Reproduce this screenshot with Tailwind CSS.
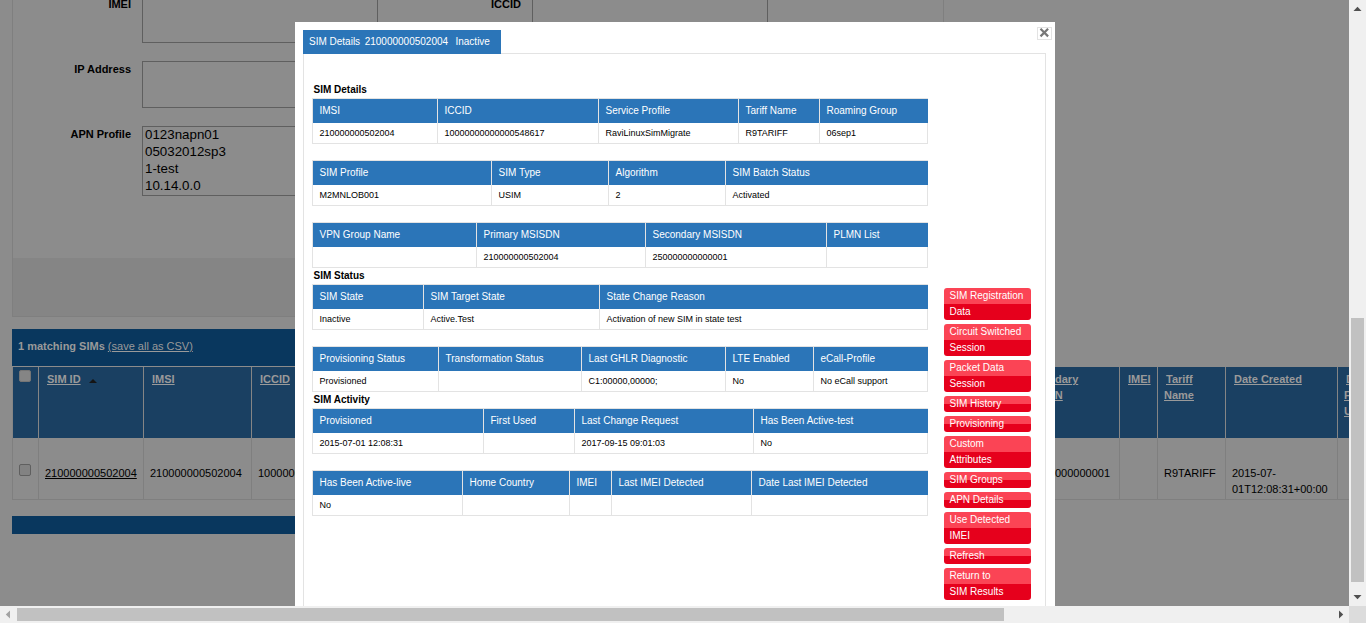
<!DOCTYPE html>
<html lang="en">
<head>
<meta charset="utf-8">
<title>SIM Details</title>
<script src="https://cdn.jsdelivr.net/npm/@tailwindcss/browser@4"></script>
</head>
<body class="overflow-hidden">
<div class="grid h-[623px] w-[1366px] grid-cols-[1349px_17px] grid-rows-[606px_17px] overflow-hidden font-['Liberation_Sans',Arial,sans-serif] text-black">

  <main class="relative h-[606px] overflow-hidden bg-[#8c8c8c] pl-3 text-[11px] leading-4">
    <!-- search form -->
    <section class="flex h-[317px] w-[932px] flex-col border-x border-b border-[#7f7f7f]">
      <div class="flex h-[43px]">
        <div class="-mt-1 w-[118px] text-right font-bold">IMEI</div>
        <div class="ml-[11px] w-[236px] border-x border-b border-[#5f5f5f]"></div>
        <div class="-mt-1 w-[143px] text-right font-bold">ICCID</div>
        <div class="ml-[11px] w-[236px] border-x border-b border-[#5f5f5f]"></div>
      </div>
      <div class="mt-[18px] flex h-[47px]">
        <div class="w-[118px] text-right font-bold">IP Address</div>
        <div class="ml-[11px] w-[236px] border border-[#5f5f5f]"></div>
      </div>
      <div class="mt-[18px] flex h-[70px]">
        <div class="w-[118px] text-right font-bold">APN Profile</div>
        <div class="ml-[11px] w-[236px] border border-[#5f5f5f] pl-0.5 text-[13.33px] leading-[17px]">
          <div class="-mt-px">0123napn01</div><div>05032012sp3</div><div>1-test</div><div>10.14.0.0</div>
        </div>
      </div>
      <div class="mt-auto h-[58px] bg-[#858585]"></div>
    </section>

    <!-- result list -->
    <div class="mt-3 h-[37px] w-[932px] bg-[#09375e] pt-[9px] pl-1.5 text-[#9a9a9a]"><b>1 matching SIMs</b> <span class="underline">(save all as CSV)</span></div>
    <div class="grid h-[72px] w-[1400px] grid-cols-[26px_105px_108px_868px_38px_68px_112px_75px] border-t border-[#8c8c8c] font-bold text-[#9a9a9a] *:border-l *:border-[#858585] *:bg-[#1a4062] *:pt-1">
      <div class="pl-1.5"><div class="mt-[-1px] h-3 w-3 rounded-xs border border-[#757575] bg-[#858585]"></div></div>
      <div class="flex items-start pl-2"><span class="underline">SIM ID</span><span class="mt-2 ml-2 border-x-[4px] border-b-[4px] border-x-transparent border-b-[#151515]"></span></div>
      <div class="pl-2 underline">IMSI</div>
      <div class="flex justify-between pr-[36px] pl-2"><span class="underline">ICCID</span><span class="w-[63px] underline"><span class="pl-0.5">Secondary</span> MSISDN</span></div>
      <div class="pl-2 underline">IMEI</div>
      <div class="pl-1.5 underline indent-0.5">Tariff<br>Name</div>
      <div class="pl-2 underline">Date Created</div>
      <div class="pl-1.5 underline indent-0.5">Date<br>First<br>Used</div>
    </div>
    <div class="grid h-[62px] w-[1400px] grid-cols-[26px_105px_108px_868px_38px_68px_112px_75px] border-b border-[#7f7f7f] *:border-l *:border-[#7f7f7f] *:pt-[27px] *:pl-1.5">
      <div><div class="mt-[-1px] h-3 w-3 rounded-xs border border-[#5f5f5f] bg-[#828282]"></div></div>
      <div class="underline">210000000502004</div>
      <div>210000000502004</div>
      <div class="flex justify-between pr-[9px]"><span>10000000000000548617</span><span>250000000000001</span></div>
      <div></div>
      <div>R9TARIFF</div>
      <div>2015-07-<br>01T12:08:31+00:00</div>
      <div></div>
    </div>
    <div class="mt-4 h-[18px] w-[932px] bg-[#09375e]"></div>

    <!-- SIM details dialog -->
    <div class="absolute top-[22px] left-[295px] h-[584px] w-[760px] overflow-hidden bg-white px-2 pt-2 text-[10px]">
      <svg class="absolute top-[5px] left-[742px] h-[13px] w-[15px]" viewBox="0 0 15 13" fill="none"><rect x=".5" y=".5" width="14" height="12" stroke="#e3e3e3"/><path d="M3.500 1.800l7.600 7.600M11.100 1.800L3.500 9.400" stroke="#777" stroke-width="2.200"/></svg>
      <div class="relative z-10 flex h-6 w-[198px] items-center bg-[#2b75b8] pl-1.5 whitespace-pre text-white"><span class="-ml-px pl-px">SIM Details  </span><span class="-ml-px">210000000502004   </span><span class="-ml-px">Inactive</span></div>
      <div class="-mt-px flex h-[600px] w-[743px] border border-[#e3e3e3]">
        <div class="ml-2 w-[616px] pt-7">
          <h3 class="h-4 pl-[1.500px] font-bold">SIM Details</h3>
          <div class="grid h-[46px] grid-cols-[125px_161px_140px_81px_109px] grid-rows-[24px_20px] border-y border-r border-[#e3e3e3] *:flex *:items-center *:border-l *:border-[#e3e3e3] *:pl-[6.5px]">
            <div class="bg-[#2b75b8] text-white">IMSI</div><div class="bg-[#2b75b8] text-white">ICCID</div><div class="bg-[#2b75b8] text-white">Service Profile</div><div class="bg-[#2b75b8] text-white">Tariff Name</div><div class="bg-[#2b75b8] text-white">Roaming Group</div>
            <div class="text-[9px]">210000000502004</div><div class="text-[9px]">10000000000000548617</div><div class="text-[9px]">RaviLinuxSimMigrate</div><div class="text-[9px]">R9TARIFF</div><div class="text-[9px]">06sep1</div>
          </div>
          <div class="mt-4 grid h-[46px] grid-cols-[179px_117px_117px_203px] grid-rows-[24px_20px] border-y border-r border-[#e3e3e3] *:flex *:items-center *:border-l *:border-[#e3e3e3] *:pl-[6.5px]">
            <div class="bg-[#2b75b8] text-white">SIM Profile</div><div class="bg-[#2b75b8] text-white">SIM Type</div><div class="bg-[#2b75b8] text-white">Algorithm</div><div class="bg-[#2b75b8] text-white">SIM Batch Status</div>
            <div class="text-[9px]">M2MNLOB001</div><div class="text-[9px]">USIM</div><div class="text-[9px]">2</div><div class="text-[9px]">Activated</div>
          </div>
          <div class="mt-4 grid h-[46px] grid-cols-[164px_169px_181px_102px] grid-rows-[24px_20px] border-y border-r border-[#e3e3e3] *:flex *:items-center *:border-l *:border-[#e3e3e3] *:pl-[6.5px]">
            <div class="bg-[#2b75b8] text-white">VPN Group Name</div><div class="bg-[#2b75b8] text-white">Primary MSISDN</div><div class="bg-[#2b75b8] text-white">Secondary MSISDN</div><div class="bg-[#2b75b8] text-white">PLMN List</div>
            <div></div><div class="text-[9px]">210000000502004</div><div class="text-[9px]">250000000000001</div><div></div>
          </div>
          <h3 class="h-4 pl-[1.5px] font-bold">SIM Status</h3>
          <div class="grid h-[46px] grid-cols-[111px_176px_329px] grid-rows-[24px_20px] border-y border-r border-[#e3e3e3] *:flex *:items-center *:border-l *:border-[#e3e3e3] *:pl-[6.5px]">
            <div class="bg-[#2b75b8] text-white">SIM State</div><div class="bg-[#2b75b8] text-white">SIM Target State</div><div class="bg-[#2b75b8] text-white">State Change Reason</div>
            <div class="text-[9px]">Inactive</div><div class="text-[9px]">Active.Test</div><div class="text-[9px]">Activation of new SIM in state test</div>
          </div>
          <div class="mt-4 grid h-[46px] grid-cols-[126px_143px_144px_88px_115px] grid-rows-[24px_20px] border-y border-r border-[#e3e3e3] *:flex *:items-center *:border-l *:border-[#e3e3e3] *:pl-[6.5px]">
            <div class="bg-[#2b75b8] text-white">Provisioning Status</div><div class="bg-[#2b75b8] text-white">Transformation Status</div><div class="bg-[#2b75b8] text-white">Last GHLR Diagnostic</div><div class="bg-[#2b75b8] text-white">LTE Enabled</div><div class="bg-[#2b75b8] text-white">eCall-Profile</div>
            <div class="text-[9px]">Provisioned</div><div></div><div class="text-[9px]">C1:00000,00000;</div><div class="text-[9px]">No</div><div class="text-[9px]">No eCall support</div>
          </div>
          <h3 class="h-4 pl-[1.5px] font-bold">SIM Activity</h3>
          <div class="grid h-[46px] grid-cols-[171px_91px_179px_175px] grid-rows-[24px_20px] border-y border-r border-[#e3e3e3] *:flex *:items-center *:border-l *:border-[#e3e3e3] *:pl-[6.5px]">
            <div class="bg-[#2b75b8] text-white">Provisioned</div><div class="bg-[#2b75b8] text-white">First Used</div><div class="bg-[#2b75b8] text-white">Last Change Request</div><div class="bg-[#2b75b8] text-white">Has Been Active-test</div>
            <div class="text-[9px]">2015-07-01 12:08:31</div><div></div><div class="text-[9px]">2017-09-15 09:01:03</div><div class="text-[9px]">No</div>
          </div>
          <div class="mt-4 grid h-[46px] grid-cols-[150px_107px_42px_140px_177px] grid-rows-[24px_20px] border-y border-r border-[#e3e3e3] *:flex *:items-center *:border-l *:border-[#e3e3e3] *:pl-[6.5px]">
            <div class="bg-[#2b75b8] text-white">Has Been Active-live</div><div class="bg-[#2b75b8] text-white">Home Country</div><div class="bg-[#2b75b8] text-white">IMEI</div><div class="bg-[#2b75b8] text-white">Last IMEI Detected</div><div class="bg-[#2b75b8] text-white">Date Last IMEI Detected</div>
            <div class="text-[9px]">No</div><div></div><div></div><div></div><div></div>
          </div>
        </div>
        <nav class="ml-4 flex w-[87px] flex-col gap-1 pt-[234px] text-white *:rounded-[3px] *:bg-linear-to-b *:from-[#fb4455] *:from-50% *:to-[#e6001c] *:to-50% *:pl-[5.5px] *:whitespace-nowrap">
          <div>SIM Registration<br>Data</div>
          <div>Circuit Switched<br>Session</div>
          <div>Packet Data<br>Session</div>
          <div>SIM History</div>
          <div>Provisioning</div>
          <div>Custom<br>Attributes</div>
          <div>SIM Groups</div>
          <div>APN Details</div>
          <div>Use Detected<br>IMEI</div>
          <div>Refresh</div>
          <div>Return to<br>SIM Results</div>
        </nav>
      </div>
    </div>
  </main>

  <!-- vertical scrollbar -->
  <div class="flex flex-col items-center bg-[#f0f0f0]">
    <svg class="h-[17px] w-[17px]" viewBox="0 0 17 17"><path d="M4.500 11h8L8.500 6.800z" fill="#505050"/></svg>
    <div class="mt-[301px] h-[264px] w-[13px] bg-[#c1c1c1]"></div>
    <svg class="mt-[7px] h-[17px] w-[17px]" viewBox="0 0 17 17"><path d="M4.500 6h8L8.500 10.200z" fill="#505050"/></svg>
  </div>
  <!-- horizontal scrollbar -->
  <div class="flex items-center bg-[#f0f0f0]">
    <svg class="h-[17px] w-[17px]" viewBox="0 0 17 17"><path d="M10 4.500v8L5.800 8.500z" fill="#a3a3a3"/></svg>
    <div class="h-[13px] w-[987px] bg-[#c1c1c1]"></div>
    <svg class="ml-auto h-[17px] w-[17px]" viewBox="0 0 17 17"><path d="M7 4.500v8l4.200-4z" fill="#505050"/></svg>
  </div>
  <div class="bg-[#dcdcdc]"></div>
</div>
</body>
</html>
